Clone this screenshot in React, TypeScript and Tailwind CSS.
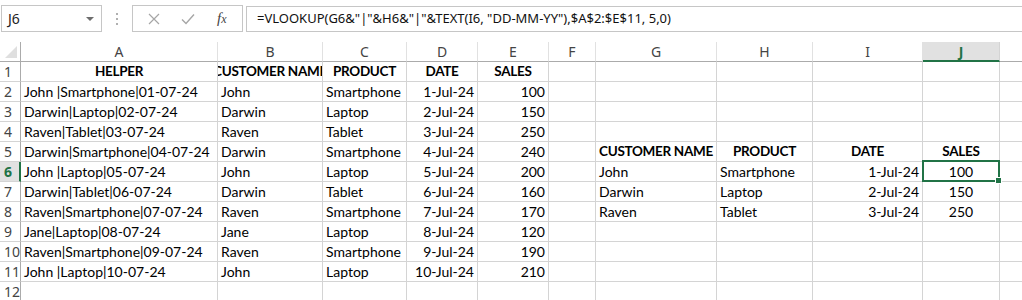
import React from 'react'

type Align = 'l' | 'c' | 'r'
type Cell = { v: string; a?: Align; b?: boolean }

const cols = ['A', 'B', 'C', 'D', 'E', 'F', 'G', 'H', 'I', 'J', 'K']

const helper: [string, string, string, string, string][] = [
  ['John |Smartphone|01-07-24', 'John', 'Smartphone', '1-Jul-24', '100'],
  ['Darwin|Laptop|02-07-24', 'Darwin', 'Laptop', '2-Jul-24', '150'],
  ['Raven|Tablet|03-07-24', 'Raven', 'Tablet', '3-Jul-24', '250'],
  ['Darwin|Smartphone|04-07-24', 'Darwin', 'Smartphone', '4-Jul-24', '240'],
  ['John |Laptop|05-07-24', 'John', 'Laptop', '5-Jul-24', '200'],
  ['Darwin|Tablet|06-07-24', 'Darwin', 'Tablet', '6-Jul-24', '160'],
  ['Raven|Smartphone|07-07-24', 'Raven', 'Smartphone', '7-Jul-24', '170'],
  ['Jane|Laptop|08-07-24', 'Jane', 'Laptop', '8-Jul-24', '120'],
  ['Raven|Smartphone|09-07-24', 'Raven', 'Smartphone', '9-Jul-24', '190'],
  ['John |Laptop|10-07-24', 'John', 'Laptop', '10-Jul-24', '210'],
]

const lookup: [string, string, string, string][] = [
  ['John', 'Smartphone', '1-Jul-24', '100'],
  ['Darwin', 'Laptop', '2-Jul-24', '150'],
  ['Raven', 'Tablet', '3-Jul-24', '250'],
]

function buildRows(): Cell[][] {
  const rows: Cell[][] = []
  const head = (v: string): Cell => ({ v, a: 'c', b: true })
  rows.push([head('HELPER'), head('CUSTOMER NAME'), head('PRODUCT'), head('DATE'), head('SALES')])
  helper.forEach((h, i) => {
    const r: Cell[] = [
      { v: h[0] },
      { v: h[1] },
      { v: h[2] },
      { v: h[3], a: 'r' },
      { v: h[4], a: 'r' },
      { v: '' },
    ]
    if (i === 3) r.push(head('CUSTOMER NAME'), head('PRODUCT'), head('DATE'), head('SALES'))
    const l = lookup[i - 4]
    if (l) r.push({ v: l[0] }, { v: l[1] }, { v: l[2], a: 'r' }, { v: l[3], a: 'c' })
    rows.push(r)
  })
  rows.push([])
  return rows
}

const rows = buildRows()

const alignCls: Record<Align, string> = {
  l: 'justify-start',
  c: 'justify-center',
  r: 'justify-end',
}

export default function App() {
  return (
    <div className="w-[1022px] h-[300px] overflow-hidden bg-white select-none">
      {/* Formula bar */}
      <div className="flex items-start pt-[5px] h-[42px] font-['Noto_Sans',sans-serif]">
        <div className="ml-px w-[101px] h-[27px] border border-[#c6c6c6] flex items-center justify-between pl-[6px] pr-[7px] text-[14px] text-[#222]">
          <span>J6</span>
          <span className="w-0 h-0 border-l-[4px] border-r-[4px] border-t-[4px] border-l-transparent border-r-transparent border-t-[#6d6d6d]" />
        </div>
        <div className="w-[30px] h-[27px] flex flex-col items-center justify-center gap-[3px]">
          <span className="w-[2px] h-[2px] bg-[#b0b0b0]" />
          <span className="w-[2px] h-[2px] bg-[#b0b0b0]" />
          <span className="w-[2px] h-[2px] bg-[#b0b0b0]" />
        </div>
        <div className="w-[111px] h-[27px] border border-[#c6c6c6] flex items-center">
          <svg width="12" height="12" viewBox="0 0 12 12" className="ml-[15px]">
            <path d="M1 1 L11 11 M11 1 L1 11" stroke="#a6a6a6" strokeWidth="1.2" fill="none" />
          </svg>
          <svg width="14" height="12" viewBox="0 0 14 12" className="ml-[21px]">
            <path d="M1 6.5 L5 10.5 L13 1.5" stroke="#a6a6a6" strokeWidth="1.4" fill="none" />
          </svg>
          <span className="ml-[22px] font-['Liberation_Serif',serif] italic text-[15px] text-[#444] leading-none">
            f<span className="text-[12px]">x</span>
          </span>
        </div>
        <div className="ml-[3px] flex-1 h-[26px] mt-px border-t border-b border-l border-[#c6c6c6] flex items-center pl-[10px] text-[13px] text-[#111] whitespace-nowrap">
          =VLOOKUP(G6&amp;"|"&amp;H6&amp;"|"&amp;TEXT(I6, "DD-MM-YY"),$A$2:$E$11, 5,0)
        </div>
      </div>

      {/* Sheet grid */}
      <div className="grid grid-cols-[21px_197px_105px_84px_71px_71px_47px_121px_96px_110px_77px_80px] auto-rows-[20px]">
        {/* Corner */}
        <div className="border-r border-b border-[#ababab] relative">
          <svg width="12" height="12" viewBox="0 0 12 12" className="absolute right-[3px] bottom-[3px]">
            <path d="M12 0 L12 12 L0 12 Z" fill="#dfdfdf" />
          </svg>
        </div>
        {/* Column headers */}
        {cols.map((c) =>
          c === 'J' ? (
            <div
              key={c}
              className="bg-[#e1e1e1] border-r border-[#d4d4d4] border-b-2 border-b-[#217346] flex items-center justify-center font-['Noto_Sans',sans-serif] text-[14px] font-bold text-[#217346]"
            >
              {c}
            </div>
          ) : (
            <div
              key={c}
              className="border-r border-[#e1e1e1] border-b border-b-[#ababab] flex items-center justify-center font-['Noto_Sans',sans-serif] text-[14px] text-[#444]"
            >
              {c}
            </div>
          ),
        )}

        {/* Body rows */}
        {rows.map((r, ri) => {
          const rowNum = ri + 1
          const active = rowNum === 6
          return (
            <React.Fragment key={ri}>
              <div
                className={
                  active
                    ? "bg-[#e1e1e1] border-r-2 border-[#217346] border-b border-b-[#d4d4d4] flex items-center pl-[4px] font-['Noto_Sans',sans-serif] text-[14px] font-bold text-[#217346]"
                    : "border-r border-[#ababab] border-b border-b-[#d4d4d4] flex items-center pl-[4px] font-['Noto_Sans',sans-serif] text-[14px] text-[#444]"
                }
              >
                {rowNum}
              </div>
              {cols.map((c, ci) => {
                const cell = r[ci]
                const sel = active && c === 'J'
                return (
                  <div
                    key={c}
                    className={`relative border-r border-b border-[#d4d4d4] flex items-center overflow-hidden whitespace-nowrap px-[3px] font-['Lato',sans-serif] text-black ${alignCls[cell?.a ?? 'l']} ${cell?.b ? 'font-bold text-[13.5px] tracking-[-0.3px]' : 'text-[14px]'} ${sel ? 'overflow-visible z-10' : ''}`}
                  >
                    {cell?.v}
                    {sel && (
                      <>
                        <span className="absolute -left-[1px] -top-[2px] -right-[1px] -bottom-[1px] border-2 border-[#217346]" />
                        <span className="absolute -right-[3px] -bottom-[3px] w-[5px] h-[5px] bg-[#217346] border border-white box-content" />
                      </>
                    )}
                  </div>
                )
              })}
            </React.Fragment>
          )
        })}
      </div>
    </div>
  )
}
